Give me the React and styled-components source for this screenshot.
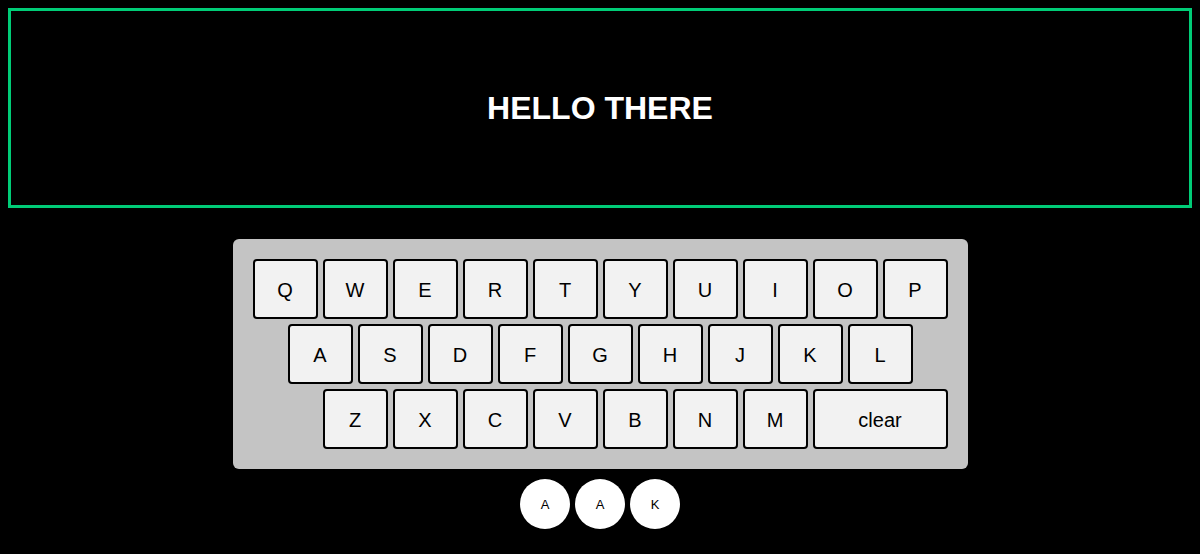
import React, {useState} from 'react';
import styled, {createGlobalStyle} from 'styled-components';

const Global = createGlobalStyle`
body {
  margin: 8px;
  background: #000;
  font-family: "Liberation Sans", Arial, sans-serif;
}
`;

const Display = styled.div`
height: 194px;
border: 3px solid #00cc77;
display: flex;
align-items: center;
justify-content: center;
`;

const Heading = styled.h1`
margin: 0;
color: #fff;
font-size: 32px;
font-weight: bold;
`;

const Keyboard = styled.div`
width: 700px;
margin: 31px auto 0;
padding: 17.5px;
background: #c4c4c4;
border-radius: 6px;
display: flex;
flex-direction: column;
`;

const Row = styled.div`
display: flex;
justify-content: ${({align}) => align === 'end' ? 'flex-end' : 'center'};
`;

const Key = styled.button`
box-sizing: border-box;
width: ${({wide}) => wide ? 135 : 65}px;
height: 60px;
margin: 2.5px;
padding: 3px 0 0;
background: #f2f2f2;
border: 2px solid #000;
border-radius: 4px;
font-family: "Liberation Sans", Arial, sans-serif;
font-size: 20px;
color: #000;
cursor: pointer;
`;

const History = styled.div`
display: flex;
justify-content: center;
gap: 5px;
margin-top: 10px;
`;

const Bubble = styled.div`
width: 50px;
height: 50px;
border-radius: 50%;
background: #fff;
color: #000;
font-size: 13px;
display: flex;
align-items: center;
justify-content: center;
`;

const rows = ['QWERTYUIOP', 'ASDFGHJKL', 'ZXCVBNM'];

export default () => {
    const [text] = useState('HELLO THERE');
    const [recent, setRecent] = useState(['A', 'A', 'K']);

    return <>
        <Global/>
        <Display><Heading>{text}</Heading></Display>
        <Keyboard>
            {rows.map((row, i) =>
                <Row key={row} align={i === 2 ? 'end' : 'center'}>
                    {row.split('').map(ch =>
                        <Key key={ch} onClick={() => setRecent([...recent.slice(-2), ch])}>{ch}</Key>)}
                    {i === 2 && <Key wide onClick={() => setRecent([])}>clear</Key>}
                </Row>)}
        </Keyboard>
        <History>
            {recent.map((ch, i) => <Bubble key={i}>{ch}</Bubble>)}
        </History>
    </>;
}
